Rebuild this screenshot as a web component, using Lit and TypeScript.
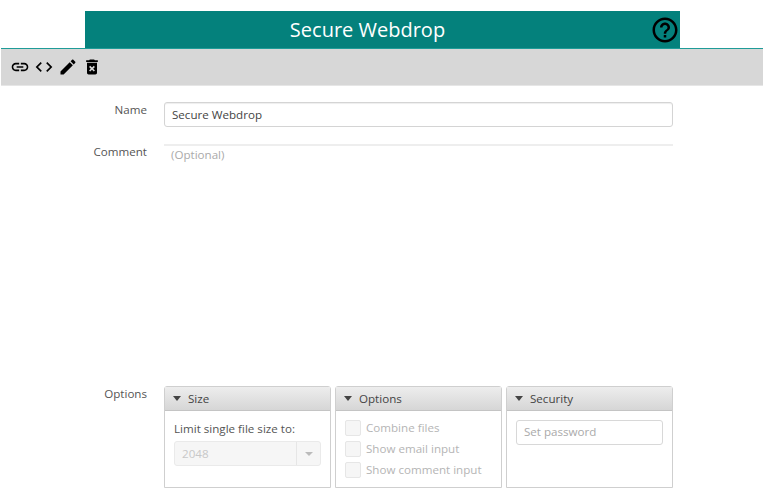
import { LitElement, html, css, svg } from "lit";
import { customElement } from "lit/decorators.js";

const icon = (d: unknown, size = 20) => html`<svg class="ic" width=${size} height=${size} viewBox="0 0 24 24" fill="#000">${d}</svg>`;

const panel = (title: string, body: unknown) => html`
  <section class="panel">
    <div class="ptitle"><span class="tri"></span><span class="ttext">${title}</span></div>
    <div class="pbody">${body}</div>
  </section>`;

@customElement("app-root")
export class AppRoot extends LitElement {
  static styles = css`
    :host { display: block; width: 768px; height: 493px; overflow: hidden; background: #fff;
      font-family: "Open Sans", "Noto Sans", sans-serif; font-size: 11.6px; color: #555; }
    * { box-sizing: border-box; }
    .page { width: 762px; margin-left: 1px; padding-top: 11px; }
    .header { margin-left: 84px; width: 595px; height: 37px; background: #04817c; position: relative;
      display: flex; align-items: center; justify-content: center; padding-right: 30px; }
    .header h1 { margin: 0; font-size: 20px; font-weight: 400; color: #fff; line-height: 37px; }
    .help { position: absolute; right: 0; top: 4px; display: block; }
    .rule { height: 1px; background: #1f9c98; }
    .toolbar { height: 37px; background: #d7d7d7; display: flex; align-items: center; padding: 0 0 0 9px; gap: 4px; border-bottom: 1px solid #e6e6e6; }
    .ic { display: block; }
    .form { display: grid; grid-template-columns: 146px 509px; column-gap: 17px; padding-top: 16px; }
    .label { text-align: right; line-height: 16px; color: #555; }
    .name { height: 25px; border: 1px solid #d4d4d4; border-radius: 3px; background: #fff; padding: 0 7px;
      line-height: 23px; color: #444; box-shadow: inset 0 1px 1px #eee; }
    .lcomment { margin-top: 17px; }
    .comment { margin-top: 17px; height: 242px; border-top: 2px solid #eee; padding: 0 7px; color: #aaa; line-height: 17px; }
    .panels { display: flex; gap: 4px; }
    .panel { width: 167px; height: 102px; border: 1px solid #cfcfcf; border-top-left-radius: 3px; border-top-right-radius: 3px; }
    .ptitle { height: 24px; background: linear-gradient(#ededed, #d6d6d6); border-bottom: 1px solid #c4c4c4;
      display: flex; align-items: center; gap: 7px; padding-left: 8px; color: #444; }
    .ttext { line-height: 22px; height: 22px; }
    .tri { width: 0; height: 0; border-left: 4px solid transparent; border-right: 4px solid transparent; border-top: 5px solid #444; }
    .pbody { padding: 9px 9px; }
    .limit { line-height: 17px; color: #555; }
    .select { margin-top: 4px; height: 25px; border: 1px solid #eaeaea; border-radius: 3px; background: #f6f6f6;
      display: flex; align-items: center; color: #c8c8c8; }
    .select .v { flex: 1; padding-left: 7px; }
    .select .arr { width: 24px; height: 100%; border-left: 1px solid #e6e6e6; display: flex; align-items: center; justify-content: center; }
    .arr i { width: 0; height: 0; border-left: 4px solid transparent; border-right: 4px solid transparent; border-top: 4px solid #bbb; }
    .checks { display: flex; flex-direction: column; gap: 5px; }
    .check { display: flex; align-items: center; gap: 5px; color: #b5b5b5; height: 16px; line-height: 16px; }
    .box { width: 16px; height: 16px; border: 1px solid #e6e6e6; border-radius: 2px; background: #f6f6f6; }
    .pwd { height: 25px; border: 1px solid #d8d8d8; border-radius: 3px; padding: 0 7px; line-height: 21px; color: #aaa; }
  `;

  render() {
    return html`<div class="page">
      <header class="header">
        <h1>Secure Webdrop</h1>
        <svg class="help" width="30" height="30" viewBox="0 0 24 24" fill="#000"><path d="M11 18h2v-2h-2v2zm1-16C6.48 2 2 6.48 2 12s4.48 10 10 10 10-4.48 10-10S17.52 2 12 2zm0 18c-4.41 0-8-3.59-8-8s3.59-8 8-8 8 3.59 8 8-3.59 8-8 8zm0-14c-2.21 0-4 1.79-4 4h2c0-1.1.9-2 2-2s2 .9 2 2c0 2-3 1.75-3 5h2c0-2.25 3-2.5 3-5 0-2.21-1.79-4-4-4z"/></svg>
      </header>
      <div class="rule"></div>
      <nav class="toolbar">
        ${icon(svg`<path d="M3.9 12c0-1.71 1.39-3.1 3.1-3.1h4V7H7c-2.76 0-5 2.24-5 5s2.24 5 5 5h4v-1.9H7c-1.71 0-3.1-1.39-3.1-3.1zM8 13h8v-2H8v2zm9-6h-4v1.9h4c1.71 0 3.1 1.39 3.1 3.1s-1.39 3.1-3.1 3.1h-4V17h4c2.76 0 5-2.24 5-5s-2.24-5-5-5z"/>`)}
        ${icon(svg`<path d="M9.4 16.6L4.8 12l4.6-4.6L8 6l-6 6 6 6 1.4-1.4zm5.2 0l4.6-4.6-4.6-4.6L16 6l6 6-6 6-1.4-1.4z"/>`)}
        ${icon(svg`<path d="M3 17.25V21h3.75L17.81 9.94l-3.75-3.75L3 17.25zM20.71 7.04c.39-.39.39-1.02 0-1.41l-2.34-2.34c-.39-.39-1.02-.39-1.41 0l-1.83 1.83 3.75 3.75 1.83-1.83z"/>`)}
        ${icon(svg`<path d="M6 19c0 1.1.9 2 2 2h8c1.1 0 2-.9 2-2V7H6v12zm2.46-7.12l1.41-1.41L12 12.59l2.12-2.12 1.41 1.41L13.41 14l2.12 2.12-1.41 1.41L12 15.41l-2.12 2.12-1.41-1.41L10.59 14l-2.13-2.12zM15.5 4l-1-1h-5l-1 1H5v2h14V4z"/>`)}
      </nav>
      <main class="form">
        <div class="label">Name</div>
        <div class="name">Secure Webdrop</div>
        <div class="label lcomment">Comment</div>
        <div class="comment">(Optional)</div>
        <div class="label">Options</div>
        <div class="panels">
          ${panel("Size", html`<div class="limit">Limit single file size to:</div>
            <div class="select"><span class="v">2048</span><span class="arr"><i></i></span></div>`)}
          ${panel("Options", html`<div class="checks">
            <label class="check"><span class="box"></span>Combine files</label>
            <label class="check"><span class="box"></span>Show email input</label>
            <label class="check"><span class="box"></span>Show comment input</label></div>`)}
          ${panel("Security", html`<div class="pwd">Set password</div>`)}
        </div>
      </main>
    </div>`;
  }
}
